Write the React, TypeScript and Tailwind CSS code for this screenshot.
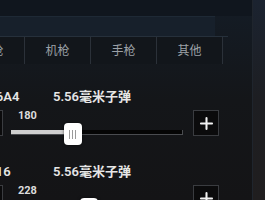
import { Plus, Minus } from "lucide-react";

const FONT = "font-['Roboto','Noto_Sans_CJK_SC',sans-serif]";

const tabs = ["步枪", "机枪", "手枪", "其他"];

const weapons = [
  { name: "M16A4", ammo: "5.56毫米子弹", value: 180 },
  { name: "M416", ammo: "5.56毫米子弹", value: 228 },
];

const MAX = 500;
const TRACK_W = 172;

function WeaponRow({ name, ammo, value }: { name: string; ammo: string; value: number }) {
  const center = (value / MAX) * TRACK_W;
  return (
    <div className="flex flex-col shrink-0">
      {/* title line */}
      <div className="flex h-[16px] shrink-0 items-center text-[13px] font-semibold text-[#e6e6e6] whitespace-nowrap">
        <div className="w-[76px] -ml-[23px] shrink-0">{name}</div>
        <div>{ammo}</div>
      </div>

      {/* controls */}
      <div className="flex h-[26px] mt-[5px] shrink-0">
        <div className="w-[26px] -ml-[23px] shrink-0 bg-[#0b0b0c] border border-[#3a3c40] flex items-center justify-center text-white">
          <Minus size={16} strokeWidth={3} />
        </div>

        <div className="relative ml-[8px] w-[172px] shrink-0 flex flex-col">
          <div className="pl-[7px] text-[11px] leading-[11px] font-bold text-[#dcdcdc]">{value}</div>
          <div className="mt-[9px] h-[5px] flex bg-[#050505] border-b border-r border-[#4a4c50]">
            <div className="h-full bg-[#cfcfcf]" style={{ width: center }} />
          </div>
          {/* thumb */}
          <div
            className="absolute top-[13px] w-[18px] h-[22px] rounded-[4px] bg-white shadow-[0_0_3px_rgba(0,0,0,0.6)] flex items-center justify-center gap-[2px]"
            style={{ left: center - 9 }}
          >
            <div className="w-px h-[9px] bg-[#9a9a9a]" />
            <div className="w-px h-[9px] bg-[#9a9a9a]" />
            <div className="w-px h-[9px] bg-[#9a9a9a]" />
          </div>
        </div>

        <div className="w-[26px] ml-[10px] shrink-0 bg-[#0b0b0c] border border-[#3a3c40] flex items-center justify-center text-[#f2f2f2]">
          <Plus size={19} strokeWidth={2.6} />
        </div>
      </div>
    </div>
  );
}

export default function App() {
  return (
    <div className={`flex w-[265px] h-[200px] overflow-hidden ${FONT}`}>
      <div className="w-[252px] shrink-0 flex flex-col bg-gradient-to-b from-[#141c26] via-[#141619] to-[#141416]">
        {/* header bands */}
        <div className="h-[16px] shrink-0 bg-[#10161e]" />
        <div className="w-[228px] h-[21px] shrink-0 border-b border-[#26303b]">
          <div className="w-[215px] h-[20px] border-t border-[#1e2935] bg-[#17202b]" />
        </div>

        {/* tab bar */}
        <div className="flex shrink-0 -ml-[41px] h-[27px] bg-[#12161b] w-fit">
          {tabs.map((t) => (
            <div
              key={t}
              className="w-[66px] border-r border-[#2b3139] flex items-center justify-center text-[12px] text-[#9ca1a7]"
            >
              {t}
            </div>
          ))}
        </div>

        <div className="mt-[25px] flex flex-col gap-[28px] shrink-0">
          {weapons.map((w) => (
            <WeaponRow key={w.name} {...w} />
          ))}
        </div>
      </div>

      {/* right edge strip */}
      <div className="flex-1 bg-gradient-to-b from-[#1b2330] via-[#1d1e22] to-[#201e1f] border-l border-[#1f252d]" />
    </div>
  );
}
